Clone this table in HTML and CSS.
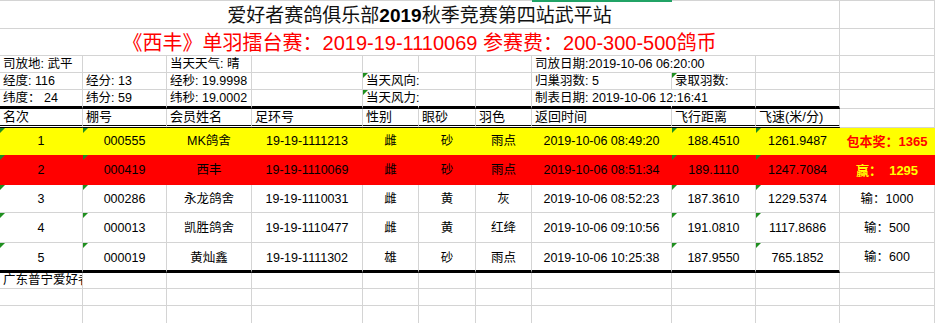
FILE: index.html
```html
<!DOCTYPE html>
<html lang="zh-CN">
<head>
<meta charset="utf-8">
<title>爱好者赛鸽俱乐部</title>
<link rel="stylesheet" href="styles.css">
</head>
<body>
<div class="sheet">
  <!-- title rows -->
  <div class="c title sel"><span>爱好者赛鸽俱乐部<b>2019</b>秋季竞赛第四站武平站</span></div>
  <div class="c"></div>
  <div class="c title sub"><span>《西丰》单羽擂台赛：2019-19-1110069 参赛费：200-300-500鸽币</span></div>
  <div class="c"></div>

  <!-- info row 1 -->
  <div class="c l">司放地: 武平</div>
  <div class="c l"></div>
  <div class="c l">当天天气: 晴</div>
  <div class="c l"></div>
  <div class="c l"></div>
  <div class="c l"></div>
  <div class="c l"></div>
  <div class="c l ov">司放日期:2019-10-06 06:20:00</div>
  <div class="c l"></div>
  <div class="c l"></div>
  <div class="c l"></div>

  <!-- info row 2 -->
  <div class="c l">经度: 116</div>
  <div class="c l">经分: 13</div>
  <div class="c l">经秒: 19.9998</div>
  <div class="c l"></div>
  <div class="c l ov tri">当天风向:</div>
  <div class="c l"></div>
  <div class="c l"></div>
  <div class="c l">归巢羽数: 5</div>
  <div class="c l tri">录取羽数:</div>
  <div class="c l"></div>
  <div class="c l"></div>

  <!-- info row 3 -->
  <div class="c l k">纬度：&nbsp;24</div>
  <div class="c l k">纬分: 59</div>
  <div class="c l k">纬秒: 19.0002</div>
  <div class="c l k"></div>
  <div class="c l k ov tri">当天风力:</div>
  <div class="c l k"></div>
  <div class="c l k"></div>
  <div class="c l k ov">制表日期: 2019-10-06 12:16:41</div>
  <div class="c l k"></div>
  <div class="c l k"></div>
  <div class="c l"></div>

  <!-- header -->
  <div class="c l h">名次</div>
  <div class="c l h">棚号</div>
  <div class="c l h">会员姓名</div>
  <div class="c l h">足环号</div>
  <div class="c l h">性别</div>
  <div class="c l h">眼砂</div>
  <div class="c l h">羽色</div>
  <div class="c l h">返回时间</div>
  <div class="c l h">飞行距离</div>
  <div class="c l h">飞速(米/分)</div>
  <div class="c l"></div>

  <!-- data rows -->
  <div class="c m y tri">1</div>
  <div class="c m y tri">000555</div>
  <div class="c m y">MK鸽舍</div>
  <div class="c m y">19-19-1111213</div>
  <div class="c m y">雌</div>
  <div class="c m y">砂</div>
  <div class="c m y">雨点</div>
  <div class="c m y">2019-10-06 08:49:20</div>
  <div class="c m y tri">188.4510</div>
  <div class="c m y tri">1261.9487</div>
  <div class="c m y prize">包本奖：1365</div>

  <div class="c m r tri">2</div>
  <div class="c m r tri">000419</div>
  <div class="c m r">西丰</div>
  <div class="c m r">19-19-1110069</div>
  <div class="c m r">雌</div>
  <div class="c m r">砂</div>
  <div class="c m r">雨点</div>
  <div class="c m r">2019-10-06 08:51:34</div>
  <div class="c m r tri">189.1110</div>
  <div class="c m r tri">1247.7084</div>
  <div class="c m r win">赢：&nbsp;&nbsp;1295</div>

  <div class="c m tri">3</div>
  <div class="c m tri">000286</div>
  <div class="c m">永龙鸽舍</div>
  <div class="c m">19-19-1110031</div>
  <div class="c m">雌</div>
  <div class="c m">黄</div>
  <div class="c m">灰</div>
  <div class="c m">2019-10-06 08:52:23</div>
  <div class="c m tri">187.3610</div>
  <div class="c m tri">1229.5374</div>
  <div class="c m">输：1000</div>

  <div class="c m tri">4</div>
  <div class="c m tri">000013</div>
  <div class="c m">凯胜鸽舍</div>
  <div class="c m">19-19-1110477</div>
  <div class="c m">雌</div>
  <div class="c m">黄</div>
  <div class="c m">红绛</div>
  <div class="c m">2019-10-06 09:10:56</div>
  <div class="c m tri">191.0810</div>
  <div class="c m tri">1117.8686</div>
  <div class="c m">输：500</div>

  <div class="c m k tri">5</div>
  <div class="c m k tri">000019</div>
  <div class="c m k">黄灿鑫</div>
  <div class="c m k">19-19-1111302</div>
  <div class="c m k">雄</div>
  <div class="c m k">砂</div>
  <div class="c m k">雨点</div>
  <div class="c m k">2019-10-06 10:25:38</div>
  <div class="c m k tri">187.9550</div>
  <div class="c m k tri">765.1852</div>
  <div class="c m kr">输：600</div>

  <!-- footer rows -->
  <div class="c l clip">广东普宁爱好者</div>
  <div class="c"></div><div class="c"></div><div class="c"></div><div class="c"></div><div class="c"></div>
  <div class="c"></div><div class="c"></div><div class="c"></div><div class="c"></div><div class="c"></div>

  <div class="c"></div><div class="c"></div><div class="c"></div><div class="c"></div><div class="c"></div><div class="c"></div>
  <div class="c"></div><div class="c"></div><div class="c"></div><div class="c"></div><div class="c"></div>

  <div class="c"></div><div class="c"></div><div class="c"></div><div class="c"></div><div class="c"></div><div class="c"></div>
  <div class="c"></div><div class="c"></div><div class="c"></div><div class="c"></div><div class="c"></div>
</div>
</body>
</html>
```

FILE: styles.css
```css
* { box-sizing: border-box; }

html, body {
  margin: 0;
  padding: 0;
  background: #ffffff;
  overflow: hidden;
}

body {
  font-family: "Liberation Sans", "Noto Sans CJK SC", sans-serif;
  font-size: 12.5px;
  color: #000;
}

.sheet {
  display: grid;
  grid-template-columns: 83px 84px 85px 111px 56px 57px 56px 140px 84px 84px 95px;
  grid-template-rows: 28px 27px 17px 17px 19px 19px 27px 30px 28px 30px 30px 16px 17px 18px;
  width: 935px;
  border-top: 1px solid #d4d4d4;
}

.c {
  position: relative;
  display: flex;
  border-right: 1px solid #d4d4d4;
  border-bottom: 1px solid #d4d4d4;
  white-space: nowrap;
  line-height: 1;
  min-width: 0;
}

/* merged title cells */
.title {
  grid-column: 1 / 11;
  justify-content: center;
  align-items: flex-end;
  padding-bottom: 3px;
  font-size: 19px;
  color: #111;
}
.title b { font-weight: bold; color: #000; }
.title.sub {
  font-size: 20px;
  color: #ff0000;
  padding-bottom: 2px;
}
.sel::after {
  content: "";
  position: absolute;
  top: -1px;
  left: 532px;
  width: 140px;
  height: 2px;
  background: #21a366;
}

/* left / bottom aligned text */
.l {
  align-items: flex-end;
  padding: 0 0 2px 3px;
}
.ov {
  overflow: visible;
  border-right-color: transparent;
  z-index: 1;
}
.clip {
  overflow: hidden;
}

/* thick black rule under a row */
.k {
  border-bottom: 3px solid #000;
}

/* header row with double rule */
.h {
  border-bottom: 3px double #000;
  font-size: 13px;
  padding-bottom: 2px;
}

/* centered data cells */
.m {
  justify-content: center;
  align-items: center;
  padding-top: 1px;
}
.m.k {
  padding-top: 3px;
}
.m.kr {
  padding-bottom: 1px;
}
.y {
  background: #ffff00;
  border-color: #ffff00;
}
.r {
  background: #ff0000;
  border-color: #ff0000;
}
.prize {
  color: #ff0000;
  font-weight: bold;
  font-size: 13px;
}
.win {
  color: #ffff00;
  font-weight: bold;
  font-size: 13px;
}

/* green "number stored as text" indicator */
.tri::before {
  content: "";
  position: absolute;
  top: 0;
  left: 0;
  width: 0;
  height: 0;
  border-top: 5px solid #1f8f1f;
  border-right: 5px solid transparent;
}
```
